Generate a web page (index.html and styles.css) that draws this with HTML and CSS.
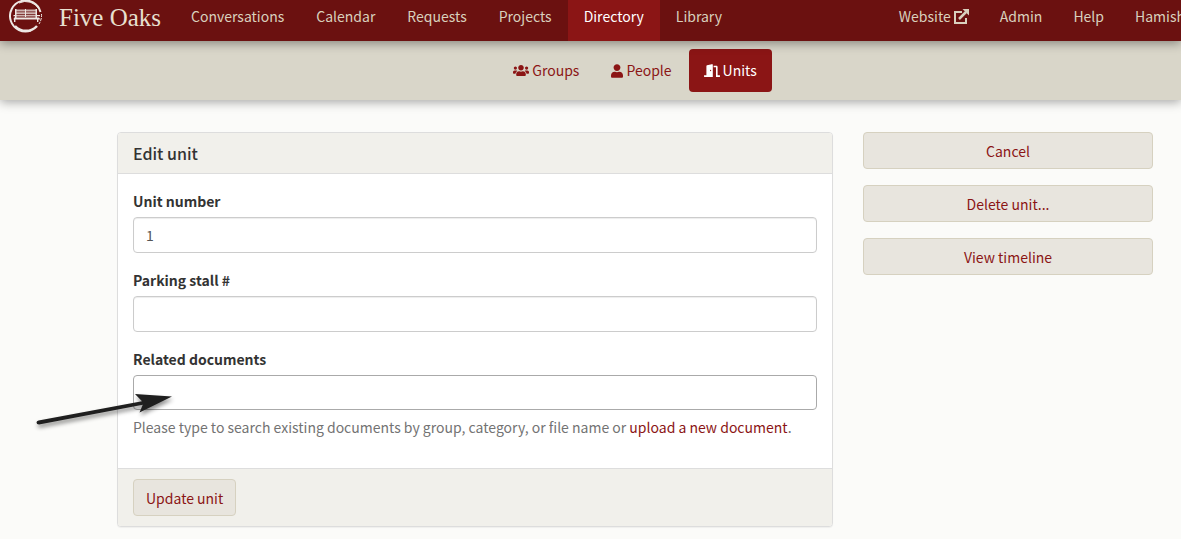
FILE: index.html
```html
<!DOCTYPE html>
<html lang="en">
<head>
<meta charset="utf-8">
<title>Edit unit</title>
<link rel="stylesheet" href="styles.css">
</head>
<body>
<header class="topbar">
  <a class="brand" href="#">
    <svg class="brand-logo" viewBox="0 0 34 34" aria-hidden="true">
      <g fill="none" stroke="currentColor">
        <path d="M31.500 12A15.500 15.500 0 1 0 22 30.500" stroke-width="2"/>
        <path d="M30 9A15.500 15.500 0 0 0 10 3" stroke-width="1"/>
        <path d="M6 26A15 15 0 0 0 28 26" stroke-width="2.500"/>
        <path d="M32.500 14A16 16 0 0 1 30 24" stroke-width="1" stroke-dasharray="3 1"/>
      </g>
      <g fill="currentColor">
        <path d="M7 9.500h20v2H7zM7 12.300h20v2H7zM7 15h20v1.500H7z" opacity=".75"/>
        <path d="M6 9h1.500v9H6zM16 9h1v8h-1zM26.500 9H28v9h-1.500zM4.500 15h3v1.200h-3zM27 15h4v1.300h-4zM5 17.500h25l1.500 2H4.500zM5 19h1.400v3H5zM28 19h1.400v3H28z"/>
      </g>
    </svg>
    <span>Five Oaks</span>
  </a>
  <nav class="menu" aria-label="Main">
    <a href="#">Conversations</a>
    <a href="#">Calendar</a>
    <a href="#">Requests</a>
    <a href="#">Projects</a>
    <a class="active" href="#">Directory</a>
    <a href="#">Library</a>
  </nav>
  <nav class="menu menu-right" aria-label="Account">
    <a href="#">Website <svg class="icon-external" viewBox="0 0 15 15" aria-hidden="true"><path d="M8 3H1v11h11V9" fill="none" stroke="currentColor" stroke-width="2"/><path d="M5 10l7-7" stroke="currentColor" stroke-width="2.500"/><path d="M8.500 0H15v6.500z" fill="currentColor"/></svg></a>
    <a href="#">Admin</a>
    <a href="#">Help</a>
    <a class="account" href="#">Hamish</a>
  </nav>
</header>
<nav class="subnav" aria-label="Directory">
  <a href="#"><svg class="icon-wide" viewBox="0 0 640 512" aria-hidden="true"><path fill="currentColor" d="M96 224c35.300 0 64-28.700 64-64s-28.700-64-64-64-64 28.700-64 64 28.700 64 64 64zm448 0c35.300 0 64-28.700 64-64s-28.700-64-64-64-64 28.700-64 64 28.700 64 64 64zm32 32h-64c-17.600 0-33.500 7.100-45.100 18.600 40.300 22.100 68.900 62 75.100 109.400h66c17.700 0 32-14.300 32-32v-32c0-35.300-28.700-64-64-64zm-256 0c61.900 0 112-50.100 112-112S381.900 32 320 32 208 82.100 208 144s50.100 112 112 112zm76.800 32h-8.300c-20.800 10-43.900 16-68.500 16s-47.600-6-68.500-16h-8.300C179.600 288 128 339.600 128 403.200V432c0 26.500 21.500 48 48 48h288c26.500 0 48-21.500 48-48v-28.800c0-63.600-51.600-115.200-115.200-115.200zm-223.700-13.400C161.500 263.100 145.600 256 128 256H64c-35.300 0-64 28.700-64 64v32c0 17.700 14.300 32 32 32h65.900c6.300-47.400 34.900-87.300 75.200-109.400z"/></svg>Groups</a>
  <a href="#"><svg class="icon-user" viewBox="0 0 448 512" aria-hidden="true"><path fill="currentColor" d="M224 256c70.700 0 128-57.300 128-128S294.700 0 224 0 96 57.300 96 128s57.300 128 128 128zm89.600 32h-16.700c-22.200 10.200-46.900 16-72.900 16s-50.600-5.800-72.900-16h-16.700C60.200 288 0 348.200 0 422.400V464c0 26.500 21.500 48 48 48h352c26.500 0 48-21.500 48-48v-41.600c0-74.200-60.200-134.400-134.400-134.400z"/></svg>People</a>
  <a class="active" href="#"><svg class="icon-wide" viewBox="0 0 640 512" aria-hidden="true"><path fill="currentColor" d="M624 448h-80V113.450C544 86.190 522.470 64 496 64H384v64h96v384h144c8.840 0 16-7.160 16-16v-32c0-8.840-7.160-16-16-16zM312.240 1.010l-192 49.740C105.990 54.440 96 67.700 96 82.920V448H16c-8.840 0-16 7.160-16 16v32c0 8.840 7.160 16 16 16h336V33.180c0-21.580-19.560-37.410-39.760-32.170zM264 288c-13.250 0-24-14.330-24-32s10.750-32 24-32 24 14.330 24 32-10.750 32-24 32z"/></svg>Units</a>
</nav>
<main class="content">
  <form class="card">
    <h1 class="card-title">Edit unit</h1>
    <div class="card-body">
      <div class="field">
        <label for="unit-number">Unit number</label>
        <input class="control" id="unit-number" type="text" value="1">
      </div>
      <div class="field">
        <label for="parking">Parking stall #</label>
        <input class="control" id="parking" type="text">
      </div>
      <div class="field">
        <label for="documents">Related documents</label>
        <input class="control control-search" id="documents" type="text">
        <p class="hint">Please type to search existing documents by group, category, or file name or <a href="#">upload a new document</a>.</p>
      </div>
    </div>
    <div class="card-footer"><button class="btn" type="button">Update unit</button></div>
    <svg class="pointer" viewBox="0 0 150 50" aria-hidden="true">
      <path d="M8.500 30.500L112 11.300L105 4L142 6.500L109.500 22.500L112.800 14.800L9 34.500Q6.500 34.500 6.500 32.500Q6.500 31 8.500 30.500Z" fill="#1f1f1f"/>
    </svg>
  </form>
  <aside class="actions">
    <button class="btn" type="button">Cancel</button>
    <button class="btn" type="button">Delete unit...</button>
    <button class="btn" type="button">View timeline</button>
  </aside>
</main>
</body>
</html>
```
FILE: styles.css
```css
* { box-sizing: border-box; }

body {
  margin: 0;
  overflow-x: hidden;
  background: #fbfbf9;
  color: #333;
  font-family: "Noto Sans CJK SC", "Open Sans", sans-serif;
  font-size: 14px;
  line-height: 23px;
}

a { color: #8b1515; text-decoration: none; }

.topbar {
  position: relative;
  display: flex;
  background: #6b1110;
  box-shadow: 0 2px 10px rgba(0, 0, 0, .4);
}

.brand {
  display: flex;
  align-items: center;
  gap: 16px;
  width: 175px;
  padding: 0 0 7px 9px;
  color: #e8e0d0;
  font-family: "Source Serif Pro", "Liberation Serif", serif;
  font-size: 25px;
  white-space: nowrap;
}

.brand-logo { width: 34px; height: 34px; color: #eee8e4; }

.menu { display: flex; }

.menu a {
  padding: 5px 16px 13px;
  color: #d9d0bd;
  white-space: nowrap;
}

.menu .active { background: #8b1515; color: #fff; }

.menu-right { gap: 1px; margin-left: auto; }
.menu-right a { padding-right: 15px; padding-left: 15px; }

.menu .account { width: 61px; padding-right: 0; }

.icon-external { width: 15px; height: 15px; vertical-align: -2px; }

.subnav {
  display: flex;
  justify-content: center;
  gap: 2px;
  padding: 8px 0 8px 89px;
  background: #d9d6c9;
  box-shadow: 0 2px 10px rgba(0, 0, 0, .35);
}

.subnav a {
  display: flex;
  align-items: center;
  gap: 3px;
  padding: 10px 15px;
  border-radius: 4px;
}

.subnav .active { background: #8b1515; color: #fff; }

.icon-wide { width: 16px; height: 13px; }
.icon-user { width: 12px; height: 14px; }

.content {
  display: grid;
  grid-template-columns: 716fr 290fr;
  gap: 30px;
  align-items: start;
  padding: 32px 28px 12px 117px;
}

.card {
  position: relative;
  border: 1px solid #ddd;
  border-radius: 4px;
  background: #fff;
  box-shadow: 0 1px 1px rgba(0, 0, 0, .05);
}

.card-title {
  margin: 0;
  padding: 10px 15px;
  border-bottom: 1px solid #ddd;
  border-radius: 3px 3px 0 0;
  background: #f1f0eb;
  font-size: 16px;
  font-weight: 500;
  line-height: 20px;
}

.card-body { padding: 15px; }

.field { margin-bottom: 15px; }

.field label {
  display: block;
  margin-bottom: 4px;
  padding-top: 1px;
  font-weight: 700;
}

.control {
  display: block;
  width: 100%;
  height: 36px;
  padding: 6px 12px;
  border: 1px solid #ccc;
  border-radius: 4px;
  background: #fff;
  box-shadow: inset 0 1px 1px rgba(0, 0, 0, .075);
  color: #555;
  font: inherit;
}

.control-search { height: 35px; border-color: #aaa; box-shadow: none; }

.hint { margin: 6px 0 14px; color: #737373; }

.card-footer {
  padding: 10px 15px;
  border-top: 1px solid #ddd;
  border-radius: 0 0 3px 3px;
  background: #f1f0eb;
}

.btn {
  display: block;
  padding: 7px 12px 5px;
  border: 1px solid #d6d1c0;
  border-radius: 4px;
  background: #e8e5de;
  color: #8b1515;
  font: inherit;
}

.actions { display: grid; gap: 16px; }

.field:last-child { margin-bottom: 0; }

.pointer {
  position: absolute;
  left: -88px;
  top: 257px;
  width: 150px;
  height: 50px;
  filter: drop-shadow(1px 3px 2px rgba(0, 0, 0, .45));
  pointer-events: none;
}
```
